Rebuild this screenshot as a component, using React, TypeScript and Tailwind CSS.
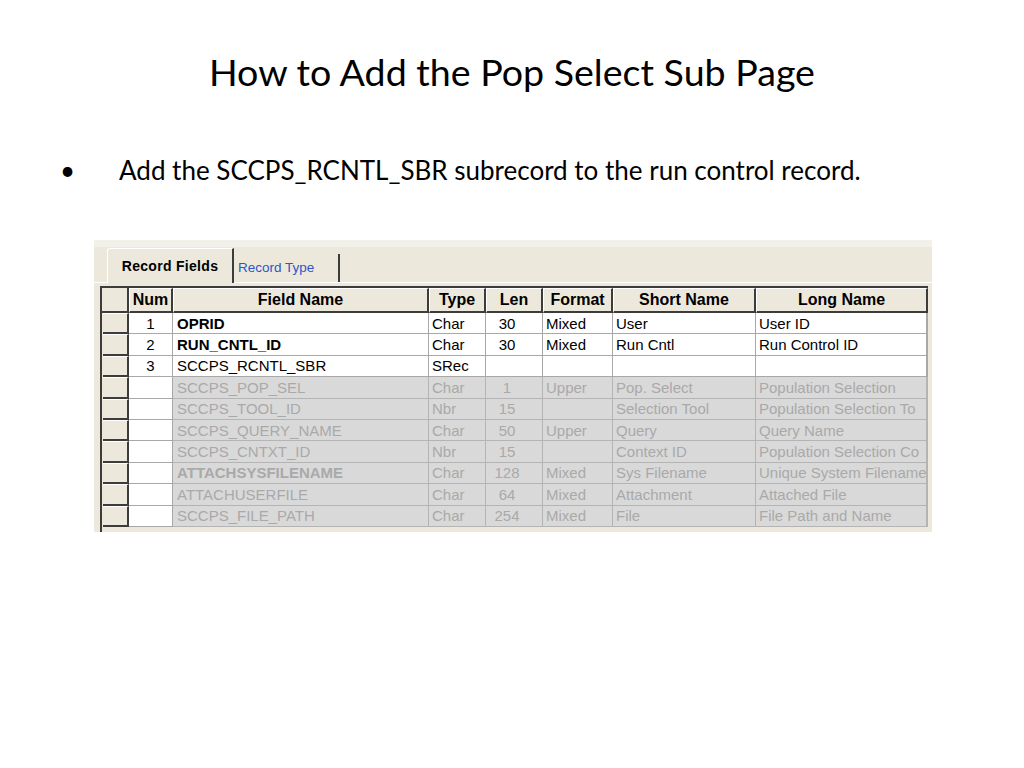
import React from 'react';

type Row = {
  num: string;
  name: string;
  type: string;
  len: string;
  format: string;
  short: string;
  long: string;
  bold?: boolean;
  dim?: boolean;
};

const rows: Row[] = [
  { num: '1', name: 'OPRID', type: 'Char', len: '30', format: 'Mixed', short: 'User', long: 'User ID', bold: true },
  { num: '2', name: 'RUN_CNTL_ID', type: 'Char', len: '30', format: 'Mixed', short: 'Run Cntl', long: 'Run Control ID', bold: true },
  { num: '3', name: 'SCCPS_RCNTL_SBR', type: 'SRec', len: '', format: '', short: '', long: '' },
  { num: '', name: 'SCCPS_POP_SEL', type: 'Char', len: '1', format: 'Upper', short: 'Pop. Select', long: 'Population Selection', dim: true },
  { num: '', name: 'SCCPS_TOOL_ID', type: 'Nbr', len: '15', format: '', short: 'Selection Tool', long: 'Population Selection To', dim: true },
  { num: '', name: 'SCCPS_QUERY_NAME', type: 'Char', len: '50', format: 'Upper', short: 'Query', long: 'Query Name', dim: true },
  { num: '', name: 'SCCPS_CNTXT_ID', type: 'Nbr', len: '15', format: '', short: 'Context ID', long: 'Population Selection Co', dim: true },
  { num: '', name: 'ATTACHSYSFILENAME', type: 'Char', len: '128', format: 'Mixed', short: 'Sys Filename', long: 'Unique System Filename', bold: true, dim: true },
  { num: '', name: 'ATTACHUSERFILE', type: 'Char', len: '64', format: 'Mixed', short: 'Attachment', long: 'Attached File', dim: true },
  { num: '', name: 'SCCPS_FILE_PATH', type: 'Char', len: '254', format: 'Mixed', short: 'File', long: 'File Path and Name', dim: true },
];

function HeadCell({ w, label }: { w: string; label: string }) {
  return (
    <div
      className={`${w} h-full flex items-center justify-center bg-[#ece9dc] border-t border-l border-t-white border-l-white border-r-2 border-b-2 border-r-[#3c3c3c] border-b-[#3c3c3c] font-bold text-[16px] text-black`}
    >
      {label}
    </div>
  );
}

function FieldGrid() {
  return (
    <div className="ml-[6px] mt-[3px] w-[828px] border-l-2 border-t-2 border-[#3c3c3c] font-['Liberation_Sans',Arial,sans-serif]">
      <div className="flex h-[25px]">
        <div className="w-[27px] h-full bg-[#ece9dc] border-r-2 border-b-2 border-[#3c3c3c]" />
        <HeadCell w="w-[44px]" label="Num" />
        <HeadCell w="w-[256px]" label="Field Name" />
        <HeadCell w="w-[57px]" label="Type" />
        <HeadCell w="w-[57px]" label="Len" />
        <HeadCell w="w-[70px]" label="Format" />
        <HeadCell w="w-[143px]" label="Short Name" />
        <HeadCell w="w-[172px]" label="Long Name" />
      </div>
      {rows.map((r, i) => {
        const cell = r.dim
          ? 'bg-[#d9d9d9] text-[#a9a9a9] border-[#b4b4b4]'
          : 'bg-white text-black border-[#a8a8a8]';
        return (
          <div key={i} className="flex h-[21.4px] text-[15px] leading-none">
            <div className="w-[27px] h-full pl-[1px]">
              <div className="h-full bg-[#ece9dc] border-r-2 border-b-2 border-[#3c3c3c] border-t border-t-white" />
            </div>
            <div className="w-[44px] h-full bg-white border-r border-b border-[#a8a8a8] text-black flex items-center justify-center">
              {r.num}
            </div>
            <div className={`w-[256px] h-full border-r border-b ${cell} flex items-center pl-[4px] ${r.bold ? 'font-bold' : ''}`}>
              {r.name}
            </div>
            <div className={`w-[57px] h-full border-r border-b ${cell} flex items-center pl-[3px]`}>{r.type}</div>
            <div className={`w-[57px] h-full border-r border-b ${cell} flex items-center justify-center pr-[14px]`}>{r.len}</div>
            <div className={`w-[70px] h-full border-r border-b ${cell} flex items-center pl-[3px]`}>{r.format}</div>
            <div className={`w-[143px] h-full border-r border-b ${cell} flex items-center pl-[3px] whitespace-nowrap overflow-hidden`}>{r.short}</div>
            <div className={`w-[172px] h-full border-r-2 border-b ${cell} flex items-center pl-[3px] whitespace-nowrap overflow-hidden`}>{r.long}</div>
          </div>
        );
      })}
      <div className="h-[5px]" />
    </div>
  );
}

function RecordPanel() {
  return (
    <div className="ml-[94px] w-[838px] h-[292px] bg-[#ece9dc] overflow-hidden">
      <div className="h-[7px] bg-[#f1f0e9]" />
      <div className="flex items-end h-[36px] pl-[13px] border-b border-white">
        <div className="w-[127px] h-[35px] bg-[#ece9dc] border-t border-l border-white border-r-2 border-r-[#3c3c3c] rounded-tl-[3px] flex items-center justify-center font-['Liberation_Sans',Arial,sans-serif] font-bold text-[14px] tracking-[0.3px] text-black -mb-[1px] relative z-10">
          Record Fields
        </div>
        <div className="w-[106px] h-[28px] border-r-2 border-r-[#3c3c3c] flex items-center pl-[4px] font-['Liberation_Sans',Arial,sans-serif] text-[13.5px] text-[#2f55c8]">
          Record Type
        </div>
      </div>
      <FieldGrid />
    </div>
  );
}

export default function App() {
  return (
    <div className="w-[1024px] h-[768px] bg-white overflow-hidden font-['Lato',sans-serif] text-black">
      <h1 className="pt-[50px] h-[108px] text-center text-[37.6px] leading-[44px]">
        How to Add the Pop Select Sub Page
      </h1>
      <div className="flex items-center h-[50px] mt-[37px]">
        <span className="w-[119px] pl-[60px] text-[26px]">•</span>
        <span className="text-[26px]">Add the SCCPS_RCNTL_SBR subrecord to the run control record.</span>
      </div>
      <div className="mt-[45px]">
        <RecordPanel />
      </div>
    </div>
  );
}
